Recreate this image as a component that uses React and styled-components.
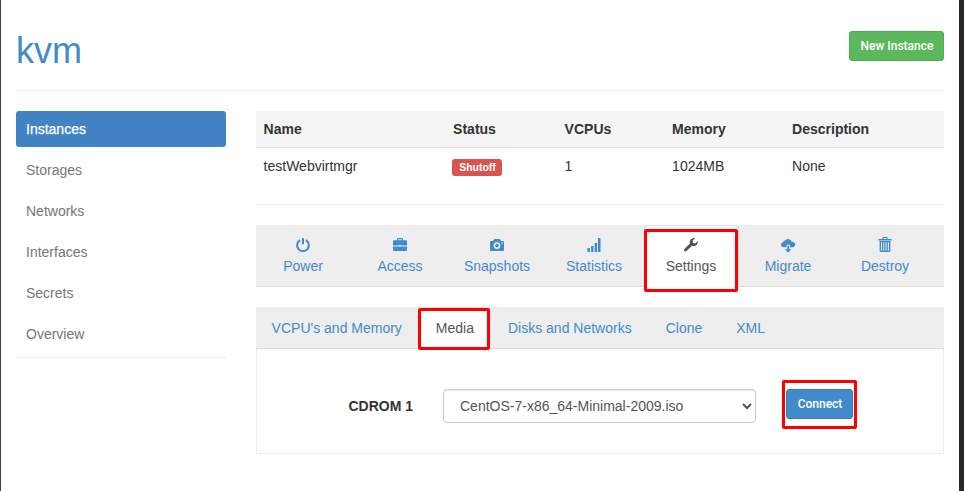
import React from 'react';
import styled, { createGlobalStyle, css } from 'styled-components';

const GlobalStyle = createGlobalStyle`
  *, *::before, *::after { box-sizing: border-box; }
  body {
    margin: 0;
    background: #fefefe;
    color: #333;
    font: 14px/20px "Liberation Sans", Arial, sans-serif;
    overflow: hidden;
  }
`;

const Page = styled.div`
  height: 491px;
  padding: 31px 15px 0;
  background: #fefefe;
  border-left: 1px solid #3a414b;
  border-right: 5px solid #272727;
`;

const Header = styled.header`
  display: flex;
  justify-content: space-between;
  align-items: flex-start;
  height: 60px;
  border-bottom: 1px solid #eee;
`;

const Title = styled.h1`
  margin: 0;
  font-size: 36px;
  font-weight: 400;
  line-height: 39px;
  color: #428bca;
`;

const Button = styled.button`
  width: ${(p) => p.$width}px;
  height: 30px;
  padding: 0 0 0 1px;
  border: 1px solid ${(p) => (p.$success ? '#4cae4c' : '#357ebd')};
  border-radius: 3px;
  background: ${(p) => (p.$success ? '#5cb85c' : '#428bca')};
  color: #fff;
  font: 500 12px/18px Roboto, sans-serif;
`;

const Columns = styled.div`
  display: grid;
  grid-template-columns: 210px 688px;
  column-gap: 30px;
  padding-top: 20px;
`;

const SideNav = styled.nav`
  display: flex;
  flex-direction: column;
  gap: 5px;
  height: 247px;
  border-bottom: 1px solid #eee;
`;

const SideLink = styled.a`
  flex: none;
  height: 36px;
  padding: 8px 10px;
  border-radius: 3px;
  color: #777;
  ${(p) => p.$active && css`
    background: #4183c4;
    color: #fff;
    -webkit-text-stroke: 0.25px #fff;
  `}
`;

const Main = styled.main`
  min-width: 0;
`;

const TableRow = styled.div`
  display: grid;
  grid-template-columns: 189.5px 111.5px 107.5px 120px 1fr;
  height: ${(p) => (p.$head ? 37 : 57)}px;
  padding-top: 8px;
  border-bottom: 1px solid ${(p) => (p.$head ? '#ddd' : '#eee')};
  background: ${(p) => (p.$head ? '#f5f5f5' : 'transparent')};
  font-weight: ${(p) => (p.$head ? 700 : 400)};
`;

const Cell = styled.span`
  padding: 0 7.6px;
`;

const BadgeCell = styled.span`
  padding: 3px 0 0 6.5px;
`;

const Badge = styled.span`
  display: block;
  width: 50px;
  height: 17px;
  padding-left: 1px;
  border-radius: 3px;
  background: #d9534f;
  color: #fff;
  font-size: 10.5px;
  font-weight: 700;
  line-height: 17px;
  text-align: center;
`;

const TabBar = styled.nav`
  display: flex;
  gap: 2px;
  height: ${(p) => p.$height}px;
  margin-top: 20px;
  background: #eee;
  border-bottom: 1px solid #ddd;
`;

const activeTab = css`
  height: calc(100% + 1px);
  color: #555;
  background: #fefefe;
  border-color: #ddd #ddd #fefefe;
`;

const ActionTab = styled.a`
  position: relative;
  display: flex;
  flex-direction: column;
  align-items: center;
  width: 95px;
  padding: 10px 1px 0 0;
  border: 1px solid transparent;
  border-radius: 4px 4px 0 0;
  line-height: 20px;
  color: #428bca;
  ${(p) => p.$active && activeTab}
`;

const SubTab = styled.a`
  position: relative;
  padding: 10px 15.4px 10px 14.6px;
  border: 1px solid transparent;
  border-radius: 4px 4px 0 0;
  color: #428bca;
  ${(p) => p.$active && activeTab}
`;

const Icon = styled.svg`
  display: block;
  width: 16px;
  height: 18px;
  margin: 0 1px 2px 0;
  fill: currentColor;
`;

const Highlight = styled.span`
  position: absolute;
  inset: ${(p) => p.$inset};
  border: 3px solid #fe0000;
  border-radius: 2px;
  pointer-events: none;
`;

const Panel = styled.section`
  display: flex;
  align-items: flex-start;
  height: 105px;
  padding-top: 40px;
  border: 1px solid #eee;
  border-top: 0;
`;

const Label = styled.label`
  width: 156px;
  padding-top: 7px;
  text-align: right;
  font-weight: 700;
`;

const Select = styled.select`
  width: 313px;
  height: 34px;
  margin: 0 30px;
  padding: 6px 12px;
  border: 1px solid #ccc;
  border-radius: 4px;
  background: #fefefe;
  color: #555;
  font: 14px/20px "Liberation Sans", Arial, sans-serif;
  box-shadow: inset 0 1px 1px rgba(0, 0, 0, 0.075);
`;

const ConnectWrap = styled.div`
  position: relative;
  display: flex;
`;

const drawings = {
  power: (
    <>
      <path d="M5.1 4.1A5.9 5.9 0 1 0 10.9 4.1" fill="none" stroke="currentColor" strokeWidth="2" />
      <rect x="7" y="2" width="2" height="6.3" rx=".5" />
    </>
  ),
  briefcase: (
    <path d="M5 4.2V3Q5 2 6 2h4q1 0 1 1v1.2h3q1 0 1 1V9.5H9.2V9H6.8v.5H1V5.2q0-1 1-1zM6.2 4.2h3.6V3.2H6.2zM1 10.5h14V14q0 1-1 1H2q-1 0-1-1z" fillRule="evenodd" />
  ),
  camera: (
    <path d="M5.4 3h5.2l1.6 2H14q1 0 1 1v8q0 1-1 1H2q-1 0-1-1V6q0-1 1-1h1.8zM8 6.2a3.4 3.4 0 1 0 0 6.8a3.4 3.4 0 1 0 0-6.8M8 7.8a1.8 1.8 0 1 1 0 3.6a1.8 1.8 0 1 1 0-3.6M12.6 6.3v1.2h1.3V6.3z" fillRule="evenodd" />
  ),
  signal: (
    <path d="M1.5 12h2.4v4H1.5zM5.1 10h2.4v6H5.1zM8.7 7h2.4v9H8.7zM12 2h2.5v14H12z" />
  ),
  wrench: (
    <path d="M14.8 5.1L12.2 7.6L10.1 6.9L9.5 4.9L12.1 2.2Q9.3 1.6 7.6 3.6Q6.3 5.2 6.9 7.4L1.4 12.9Q.5 13.8 1.2 14.8Q2.2 16 3.4 15L9.2 9.7Q11.7 10.6 13.6 9Q15.3 7.4 14.8 5.1" />
  ),
  cloud: (
    <>
      <path d="M3.2 11.2Q1 10.8 1 8.7Q1.1 6.6 3.2 6.3Q3.4 4.2 5.3 4.4Q6.4 2.5 8.6 3Q11.1 3.4 11.7 5.8Q15 5.8 15.2 8.6Q15.2 11.1 12.5 11.3H10V8.7H6.5v2.5z" />
      <path d="M7.3 9.7h1.9v3.6h2.2L8.2 16.4L4.9 13.3h2.4z" />
    </>
  ),
  trash: (
    <>
      <path d="M5.5 3V1.8Q5.5 1 6.4 1h3.3q.9 0 .9.8V3h4v1.4H1.5V3zM6.7 3h2.7V2H6.7z" fillRule="evenodd" />
      <path d="M2.6 5.1h10.8V14.8q0 1.2-1.2 1.2H3.8q-1.2 0-1.2-1.2zM4 6.3v8.4h1V6.3zM6.3 6.3v8.4h1V6.3zM8.6 6.3v8.4h1V6.3zM10.9 6.3v8.4h1V6.3z" fillRule="evenodd" />
    </>
  ),
};

const sections = ['Instances', 'Storages', 'Networks', 'Interfaces', 'Secrets', 'Overview'];
const columns = ['Name', 'Status', 'VCPUs', 'Memory', 'Description'];
const actions = [
  ['Power', 'power'],
  ['Access', 'briefcase'],
  ['Snapshots', 'camera'],
  ['Statistics', 'signal'],
  ['Settings', 'wrench'],
  ['Migrate', 'cloud'],
  ['Destroy', 'trash'],
];
const settings = ["VCPU's and Memory", 'Media', 'Disks and Networks', 'Clone', 'XML'];

export default function App() {
  return (
    <>
      <GlobalStyle />
      <Page>
        <Header>
          <Title>kvm</Title>
          <Button $success $width={95}>New Instance</Button>
        </Header>
        <Columns>
          <SideNav>
            {sections.map((name) => (
              <SideLink key={name} $active={name === 'Instances'}>{name}</SideLink>
            ))}
          </SideNav>
          <Main>
            <TableRow $head>
              {columns.map((name) => <Cell key={name}>{name}</Cell>)}
            </TableRow>
            <TableRow>
              <Cell>testWebvirtmgr</Cell>
              <BadgeCell><Badge>Shutoff</Badge></BadgeCell>
              <Cell>1</Cell>
              <Cell>1024MB</Cell>
              <Cell>None</Cell>
            </TableRow>
            <TabBar $height={62}>
              {actions.map(([name, icon]) => (
                <ActionTab key={name} $active={name === 'Settings'}>
                  <Icon viewBox="0 0 16 18">{drawings[icon]}</Icon>
                  {name}
                  {name === 'Settings' && <Highlight $inset="3px 0 -6px -1px" />}
                </ActionTab>
              ))}
            </TabBar>
            <TabBar $height={42}>
              {settings.map((name) => (
                <SubTab key={name} $active={name === 'Media'}>
                  {name}
                  {name === 'Media' && <Highlight $inset="0 -1px -2px -3px" />}
                </SubTab>
              ))}
            </TabBar>
            <Panel>
              <Label htmlFor="iso">CDROM 1</Label>
              <Select id="iso">
                <option>CentOS-7-x86_64-Minimal-2009.iso</option>
              </Select>
              <ConnectWrap>
                <Button $width={67}>Connect</Button>
                <Highlight $inset="-9px -4px -10px -4px" />
              </ConnectWrap>
            </Panel>
          </Main>
        </Columns>
      </Page>
    </>
  );
}
